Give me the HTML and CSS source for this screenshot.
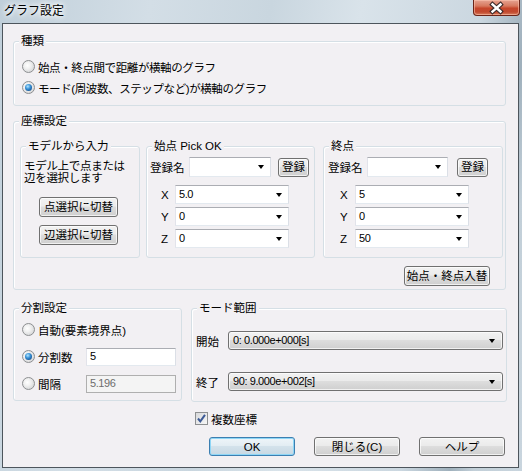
FILE: index.html
```html
<!DOCTYPE html>
<html lang="ja">
<head>
<meta charset="utf-8">
<title>グラフ設定</title>
<link rel="stylesheet" href="styles.css">
</head>
<body>
<div class="window">
  <div class="titlebar">
    <span class="title">グラフ設定</span>
    <div class="close">
      <svg width="45" height="14" viewBox="0 0 45 14">
        <path d="M18.5 3.5 L26.5 10.5 M26.5 3.5 L18.5 10.5" stroke="#3b2a2a" stroke-width="4.6" stroke-linecap="square" fill="none"/>
        <path d="M18.5 3.5 L26.5 10.5 M26.5 3.5 L18.5 10.5" stroke="#ffffff" stroke-width="2.4" stroke-linecap="square" fill="none"/>
      </svg>
    </div>
  </div>
  <div class="client">
    <div class="group g-kind">
      <span class="legend">種類</span>
      <div class="opt"><span class="radio"></span><span>始点・終点間で距離が横軸のグラフ</span></div>
      <div class="opt"><span class="radio on"></span><span>モード(周波数、ステップなど)が横軸のグラフ</span></div>
    </div>

    <div class="group g-coord">
      <span class="legend">座標設定</span>
      <div class="coord-row">
        <div class="group g-model">
          <span class="legend">モデルから入力</span>
          <p class="model-text">モデル上で点または<br>辺を選択します</p>
          <button class="btn btn-sel first">点選択に切替</button>
          <button class="btn btn-sel">辺選択に切替</button>
        </div>
        <div class="group g-pt g-start">
          <span class="legend">始点 Pick OK</span>
          <div class="reg-row">
            <span class="reg-label">登録名</span>
            <div class="combo reg-combo"><span class="val"></span><span class="arrow"></span></div>
            <button class="btn btn-reg">登録</button>
          </div>
          <div class="xyz first"><span class="axis">X</span><div class="combo xyz-combo"><span class="val">5.0</span><span class="arrow"></span></div></div>
          <div class="xyz"><span class="axis">Y</span><div class="combo xyz-combo"><span class="val">0</span><span class="arrow"></span></div></div>
          <div class="xyz"><span class="axis">Z</span><div class="combo xyz-combo"><span class="val">0</span><span class="arrow"></span></div></div>
        </div>
        <div class="group g-pt g-end">
          <span class="legend">終点</span>
          <div class="reg-row">
            <span class="reg-label">登録名</span>
            <div class="combo reg-combo"><span class="val"></span><span class="arrow"></span></div>
            <button class="btn btn-reg">登録</button>
          </div>
          <div class="xyz first"><span class="axis">X</span><div class="combo xyz-combo"><span class="val">5</span><span class="arrow"></span></div></div>
          <div class="xyz"><span class="axis">Y</span><div class="combo xyz-combo"><span class="val">0</span><span class="arrow"></span></div></div>
          <div class="xyz"><span class="axis">Z</span><div class="combo xyz-combo"><span class="val">50</span><span class="arrow"></span></div></div>
        </div>
      </div>
      <div class="swap-row"><button class="btn btn-swap">始点・終点入替</button></div>
    </div>

    <div class="bottom-row">
      <div class="group g-div">
        <span class="legend">分割設定</span>
        <div class="div-row"><span class="radio"></span><span class="div-label wide">自動(要素境界点)</span></div>
        <div class="div-row"><span class="radio on"></span><span class="div-label">分割数</span><div class="tb"><span class="val">5</span></div></div>
        <div class="div-row"><span class="radio"></span><span class="div-label">間隔</span><div class="tb disabled"><span class="val">5.196</span></div></div>
      </div>
      <div class="group g-mode">
        <span class="legend">モード範囲</span>
        <div class="mode-row first"><span class="mode-label">開始</span><div class="ddl"><span class="val">0: 0.000e+000[s]</span><span class="arrow"></span></div></div>
        <div class="mode-row"><span class="mode-label">終了</span><div class="ddl"><span class="val">90: 9.000e+002[s]</span><span class="arrow"></span></div></div>
      </div>
    </div>

    <div class="check-row">
      <span class="check"><svg width="11" height="11" viewBox="0 0 11 11"><path d="M2 5.5 L4.3 8.3 L9 1.8" stroke="#3d5a96" stroke-width="2" fill="none"/></svg></span>
      <span>複数座標</span>
    </div>

    <div class="btn-row">
      <button class="btn btn-main default">OK</button>
      <button class="btn btn-main">閉じる(C)</button>
      <button class="btn btn-main">ヘルプ</button>
    </div>
  </div>
</div>
</body>
</html>
```

FILE: styles.css
```css
html, body {
  margin: 0;
  padding: 0;
}
body {
  width: 522px;
  height: 471px;
  overflow: hidden;
  font-family: "Liberation Sans", "Noto Sans CJK JP", sans-serif;
  font-size: 11.5px;
  color: #000;
  background: #c3d1db;
}
.window {
  width: 522px;
  height: 471px;
  background:
    linear-gradient(100deg, #c0cfda 0%, #d3dee6 25%, #c9d6df 45%, #d9e3ea 60%, #cbd7e0 80%, #9fb0bc 88%, #c2cfd8 92%, #c9d5de 100%);
}
.titlebar {
  height: 23px;
  display: flex;
  justify-content: space-between;
  align-items: flex-start;
}
.title {
  font-family: "Noto Sans CJK JP", sans-serif;
  font-size: 12px;
  line-height: 14px;
  margin: 3px 0 0 4px;
  text-shadow: 0 0 4px #fff, 0 0 6px #fff, 0 0 8px rgba(255,255,255,.8);
}
.close {
  width: 47px;
  height: 16px;
  box-sizing: border-box;
  margin-right: 2px;
  border: 1px solid #6b2418;
  border-top: none;
  border-radius: 0 0 4px 4px;
  background: linear-gradient(#e6a392 0%, #d7795f 40%, #c6462b 55%, #c24a30 80%, #d8805f 100%);
  box-shadow: inset 0 0 0 1px rgba(255, 200, 180, .55);
  display: flex;
  align-items: center;
  justify-content: center;
}
.close svg { display: block; }

.client {
  box-sizing: border-box;
  margin-left: 2px;
  width: 517px;
  height: 445px;
  border: 1px solid #4d555c;
  background: #f2f0f3;
  display: flex;
  flex-direction: column;
  align-items: flex-start;
}

.group {
  position: relative;
  box-sizing: border-box;
  border: 1px solid #d5dfe5;
  border-radius: 3px;
  box-shadow: inset 1px 1px 0 #ffffff;
}
.legend {
  position: absolute;
  top: -8px;
  left: 5px;
  padding: 0 2px;
  line-height: 14px;
  background: #f2f0f3;
  white-space: nowrap;
}

/* 種類 */
.g-kind {
  margin: 17px 0 0 10px;
  width: 493px;
  height: 65px;
  padding: 14px 0 0 8px;
}
.opt {
  display: flex;
  align-items: center;
  height: 21px;
  gap: 3px;
  letter-spacing: -0.4px;
}

/* radio & check */
.radio {
  flex: none;
  box-sizing: border-box;
  width: 13px;
  height: 13px;
  border-radius: 50%;
  border: 1px solid #8d8f91;
  background: radial-gradient(circle at 40% 40%, #ffffff 0%, #f1f1f1 35%, #c9cbcd 100%);
  display: inline-flex;
  align-items: center;
  justify-content: center;
}
.radio.on::after {
  content: "";
  width: 7px;
  height: 7px;
  border-radius: 50%;
  background: radial-gradient(circle at 40% 35%, #b3e6ff 0%, #3a93d8 40%, #114a8a 85%, #0c3566 100%);
}
.check {
  flex: none;
  box-sizing: border-box;
  width: 13px;
  height: 13px;
  border: 1px solid #8d8f91;
  background: linear-gradient(135deg, #d8d9db, #f7f7f7);
  display: inline-flex;
  align-items: center;
  justify-content: center;
}
.check svg { display: block; }

/* 座標設定 */
.g-coord {
  margin: 15px 0 0 10px;
  width: 493px;
  height: 169px;
  padding: 24px 0 0 6px;
}
.coord-row {
  display: flex;
  align-items: flex-start;
}
.g-model {
  width: 120px;
  height: 112px;
  margin-right: 6px;
  padding: 13px 0 0 3px;
}
.model-text {
  margin: 0;
  line-height: 12px;
  letter-spacing: -0.3px;
}
.btn-sel {
  display: flex;
  margin: 8px 0 0 15px;
  width: 79px;
  height: 20px;
}
.btn-sel.first { margin-top: 13px; }

.g-pt {
  height: 112px;
  padding-top: 10px;
}
.g-start { width: 169px; margin-right: 8px; padding-left: 3px; }
.g-end { width: 180px; padding-left: 4px; }
.reg-row {
  display: flex;
  align-items: center;
  height: 20px;
}
.reg-label { width: 39px; flex: none; }
.reg-combo { width: 82px; height: 20px; }
.g-end .reg-combo { width: 81px; }
.btn-reg {
  width: 31px;
  height: 19px;
  margin-left: 7px;
}
.g-end .btn-reg { margin-left: 9px; }
.xyz {
  display: flex;
  align-items: center;
  margin-top: 3px;
  padding-left: 11px;
}
.xyz.first { margin-top: 8px; }
.g-end .xyz { padding-left: 12px; }
.axis { width: 14px; flex: none; }
.g-end .axis { width: 15px; }
.xyz-combo { width: 114px; height: 19px; }

.combo, .tb {
  box-sizing: border-box;
  display: flex;
  align-items: center;
  background: #ffffff;
  border: 1px solid;
  border-color: #abadb3 #dbdfe6 #e3e9ef #e2e3ea;
  padding-left: 3px;
}
.val {
  font-size: 11px;
  letter-spacing: -0.4px;
  line-height: 13px;
  white-space: nowrap;
}
.arrow {
  margin-left: auto;
  margin-right: 6px;
  width: 0;
  height: 0;
  border-left: 3.5px solid transparent;
  border-right: 3.5px solid transparent;
  border-top: 4px solid #000;
}
.swap-row {
  display: flex;
  justify-content: flex-end;
  width: 470px;
  margin-top: 8px;
}
.btn-swap {
  width: 86px;
  height: 20px;
}

/* buttons */
.btn {
  box-sizing: border-box;
  font: inherit;
  color: #000;
  padding: 0;
  border: 1px solid #707070;
  border-radius: 3px;
  background: linear-gradient(#f2f2f2 0%, #ebebeb 45%, #dddddd 50%, #cfcfcf 100%);
  box-shadow: inset 0 0 0 1px rgba(255, 255, 255, .7);
  display: flex;
  align-items: center;
  justify-content: center;
  white-space: nowrap;
  line-height: 12px;
}

/* bottom */
.bottom-row {
  display: flex;
  align-items: flex-start;
  gap: 9px;
  margin: 18px 0 0 10px;
}
.g-div {
  width: 169px;
  height: 93px;
  padding: 7px 0 0 8px;
}
.div-row {
  display: flex;
  align-items: center;
  height: 27px;
}
.div-label {
  margin-left: 3px;
  width: 48px;
  flex: none;
}
.div-label.wide { width: auto; }
.tb {
  width: 90px;
  height: 18px;
}
.tb.disabled {
  background: #f4f4f4;
  border-color: #afafaf;
  color: #6d6d6d;
}
.g-mode {
  width: 316px;
  height: 94px;
  padding: 22px 0 0 4px;
}
.mode-row {
  display: flex;
  align-items: center;
}
.mode-row + .mode-row { margin-top: 22px; }
.mode-label { width: 32px; flex: none; }
.ddl {
  box-sizing: border-box;
  width: 275px;
  height: 19px;
  display: flex;
  align-items: center;
  padding-left: 4px;
  border: 1px solid #707070;
  border-radius: 3px;
  background: linear-gradient(#f2f2f2 0%, #ebebeb 45%, #dddddd 50%, #cfcfcf 100%);
  box-shadow: inset 0 0 0 1px rgba(255, 255, 255, .7);
}
.ddl .arrow { margin-right: 7px; }

.check-row {
  display: flex;
  align-items: center;
  gap: 3px;
  margin: 10px 0 0 192px;
  height: 13px;
}
.btn-row {
  display: flex;
  gap: 19px;
  margin: 12px 0 0 206px;
}
.btn-main {
  width: 86px;
  height: 19px;
}
.btn.default {
  border-color: #3c7fb1;
  box-shadow: inset 0 0 0 1px #8ed6f6;
  background: linear-gradient(#eef5f9 0%, #e3edf3 45%, #d3e2eb 50%, #c7d8e3 100%);
}
```
